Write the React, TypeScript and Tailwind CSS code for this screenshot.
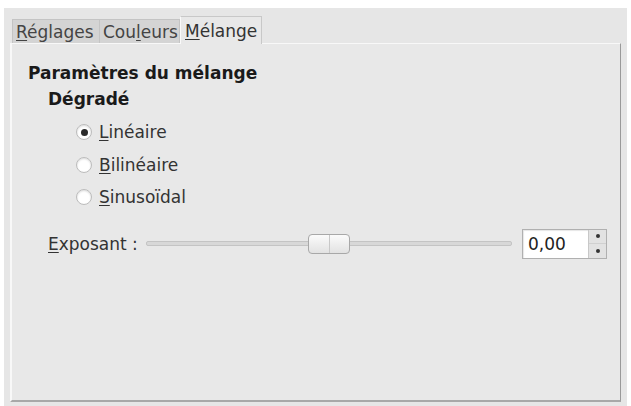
import React from "react";

function Radio({ checked, label, u }: { checked?: boolean; label: string; u: string }) {
  const rest = label.slice(1);
  return (
    <div className="flex items-center h-[32.5px]">
      <div className="w-[16px] h-[16px] rounded-full border border-[#bcbcbc] bg-white shadow-[inset_0_1px_2px_rgba(0,0,0,0.15)] flex items-center justify-center">
        {checked && <div className="w-[7px] h-[7px] rounded-full bg-[#2a2a2a]" />}
      </div>
      <span className="ml-[7px] text-[#333]">
        <span className="underline underline-offset-2">{u}</span>
        {rest}
      </span>
    </div>
  );
}

export default function App() {
  return (
    <div
      className="w-[631px] h-[406px] bg-white pl-[4px] pt-[8px] pr-[4px] text-[17px] leading-[22px] text-[#303030]"
      style={{ fontFamily: '"DejaVu Sans", "Liberation Sans", sans-serif' }}
    >
      <div className="w-full h-full bg-[#e6e6e6] pl-[6px] pr-[6px] pt-[8px] pb-[4px] flex flex-col">
        {/* tabs */}
        <div className="flex items-end h-[27px] pl-[2px]">
          <div className="w-[88px] h-[24px] pl-[3px] flex items-center bg-[#d4d4d4] border border-[#c4c4c4] border-b-0 text-[#444] whitespace-nowrap overflow-hidden">
            <span><span className="underline underline-offset-2">R</span>églages</span>
          </div>
          <div className="w-[80px] h-[24px] pl-[3px] flex items-center bg-[#d4d4d4] border border-[#c4c4c4] border-b-0 border-l-0 text-[#444] whitespace-nowrap overflow-hidden">
            <span>Cou<span className="underline underline-offset-2">l</span>eurs</span>
          </div>
          <div className="w-[82px] h-[28px] pl-[4px] flex items-center bg-[#e8e8e8] border border-[#c8c8c8] border-b-0 border-l-[#fafafa] text-[#333] relative top-[1px] z-10 whitespace-nowrap overflow-hidden">
            <span><span className="underline underline-offset-2">M</span>élange</span>
          </div>
        </div>
        {/* panel */}
        <div className="flex-1 bg-[#e8e8e8] border-t border-l-2 border-[#f8f8f8] border-r border-r-[#9a9a9a] border-b-2 border-b-[#a8a8a8] pl-[16px] pr-[12px] pt-[18px]">
          <div className="font-bold text-[#1a1a1a]">Paramètres du mélange</div>
          <div className="font-bold text-[#1a1a1a] mt-[4px] ml-[20px]">Dégradé</div>
          <div className="ml-[48px] mt-[6px]">
            <Radio checked label="Linéaire" u="L" />
            <Radio label="Bilinéaire" u="B" />
            <Radio label="Sinusoïdal" u="S" />
          </div>
          <div className="flex items-center mt-[15px] ml-[20px] h-[30px]">
            <span className="text-[#333] w-[98px] whitespace-nowrap">
              <span className="underline underline-offset-2">E</span>xposant :
            </span>
            <div className="relative w-[366px] h-[24px] flex items-center">
              <div className="w-full h-[5px] rounded-[2px] bg-[#d8d8d8] border border-[#c4c4c4]" />
              <div className="absolute left-[162px] top-[2px] w-[42px] h-[20px] rounded-[4px] border border-[#a8a8a8] bg-gradient-to-b from-[#fbfbfb] to-[#e2e2e2] flex justify-center">
                <div className="w-px h-full bg-[#c8c8c8]" />
              </div>
            </div>
            <div className="ml-[10px] w-[85px] h-[30px] border border-[#b0b0b0] bg-white flex shadow-[inset_1px_1px_1px_rgba(0,0,0,0.1)]">
              <div className="flex-1 flex items-center pl-[5px] text-[17px] text-[#222]">0,00</div>
              <div className="w-[18px] bg-[#e2e2e2] border-l border-[#c8c8c8] flex flex-col">
                <div className="flex-1 flex items-center justify-center border-b border-[#d0d0d0]">
                  <div className="w-[4px] h-[4px] bg-[#333] rounded-full" />
                </div>
                <div className="flex-1 flex items-center justify-center">
                  <div className="w-[4px] h-[4px] bg-[#333] rounded-full" />
                </div>
              </div>
            </div>
          </div>
        </div>
      </div>
    </div>
  );
}
